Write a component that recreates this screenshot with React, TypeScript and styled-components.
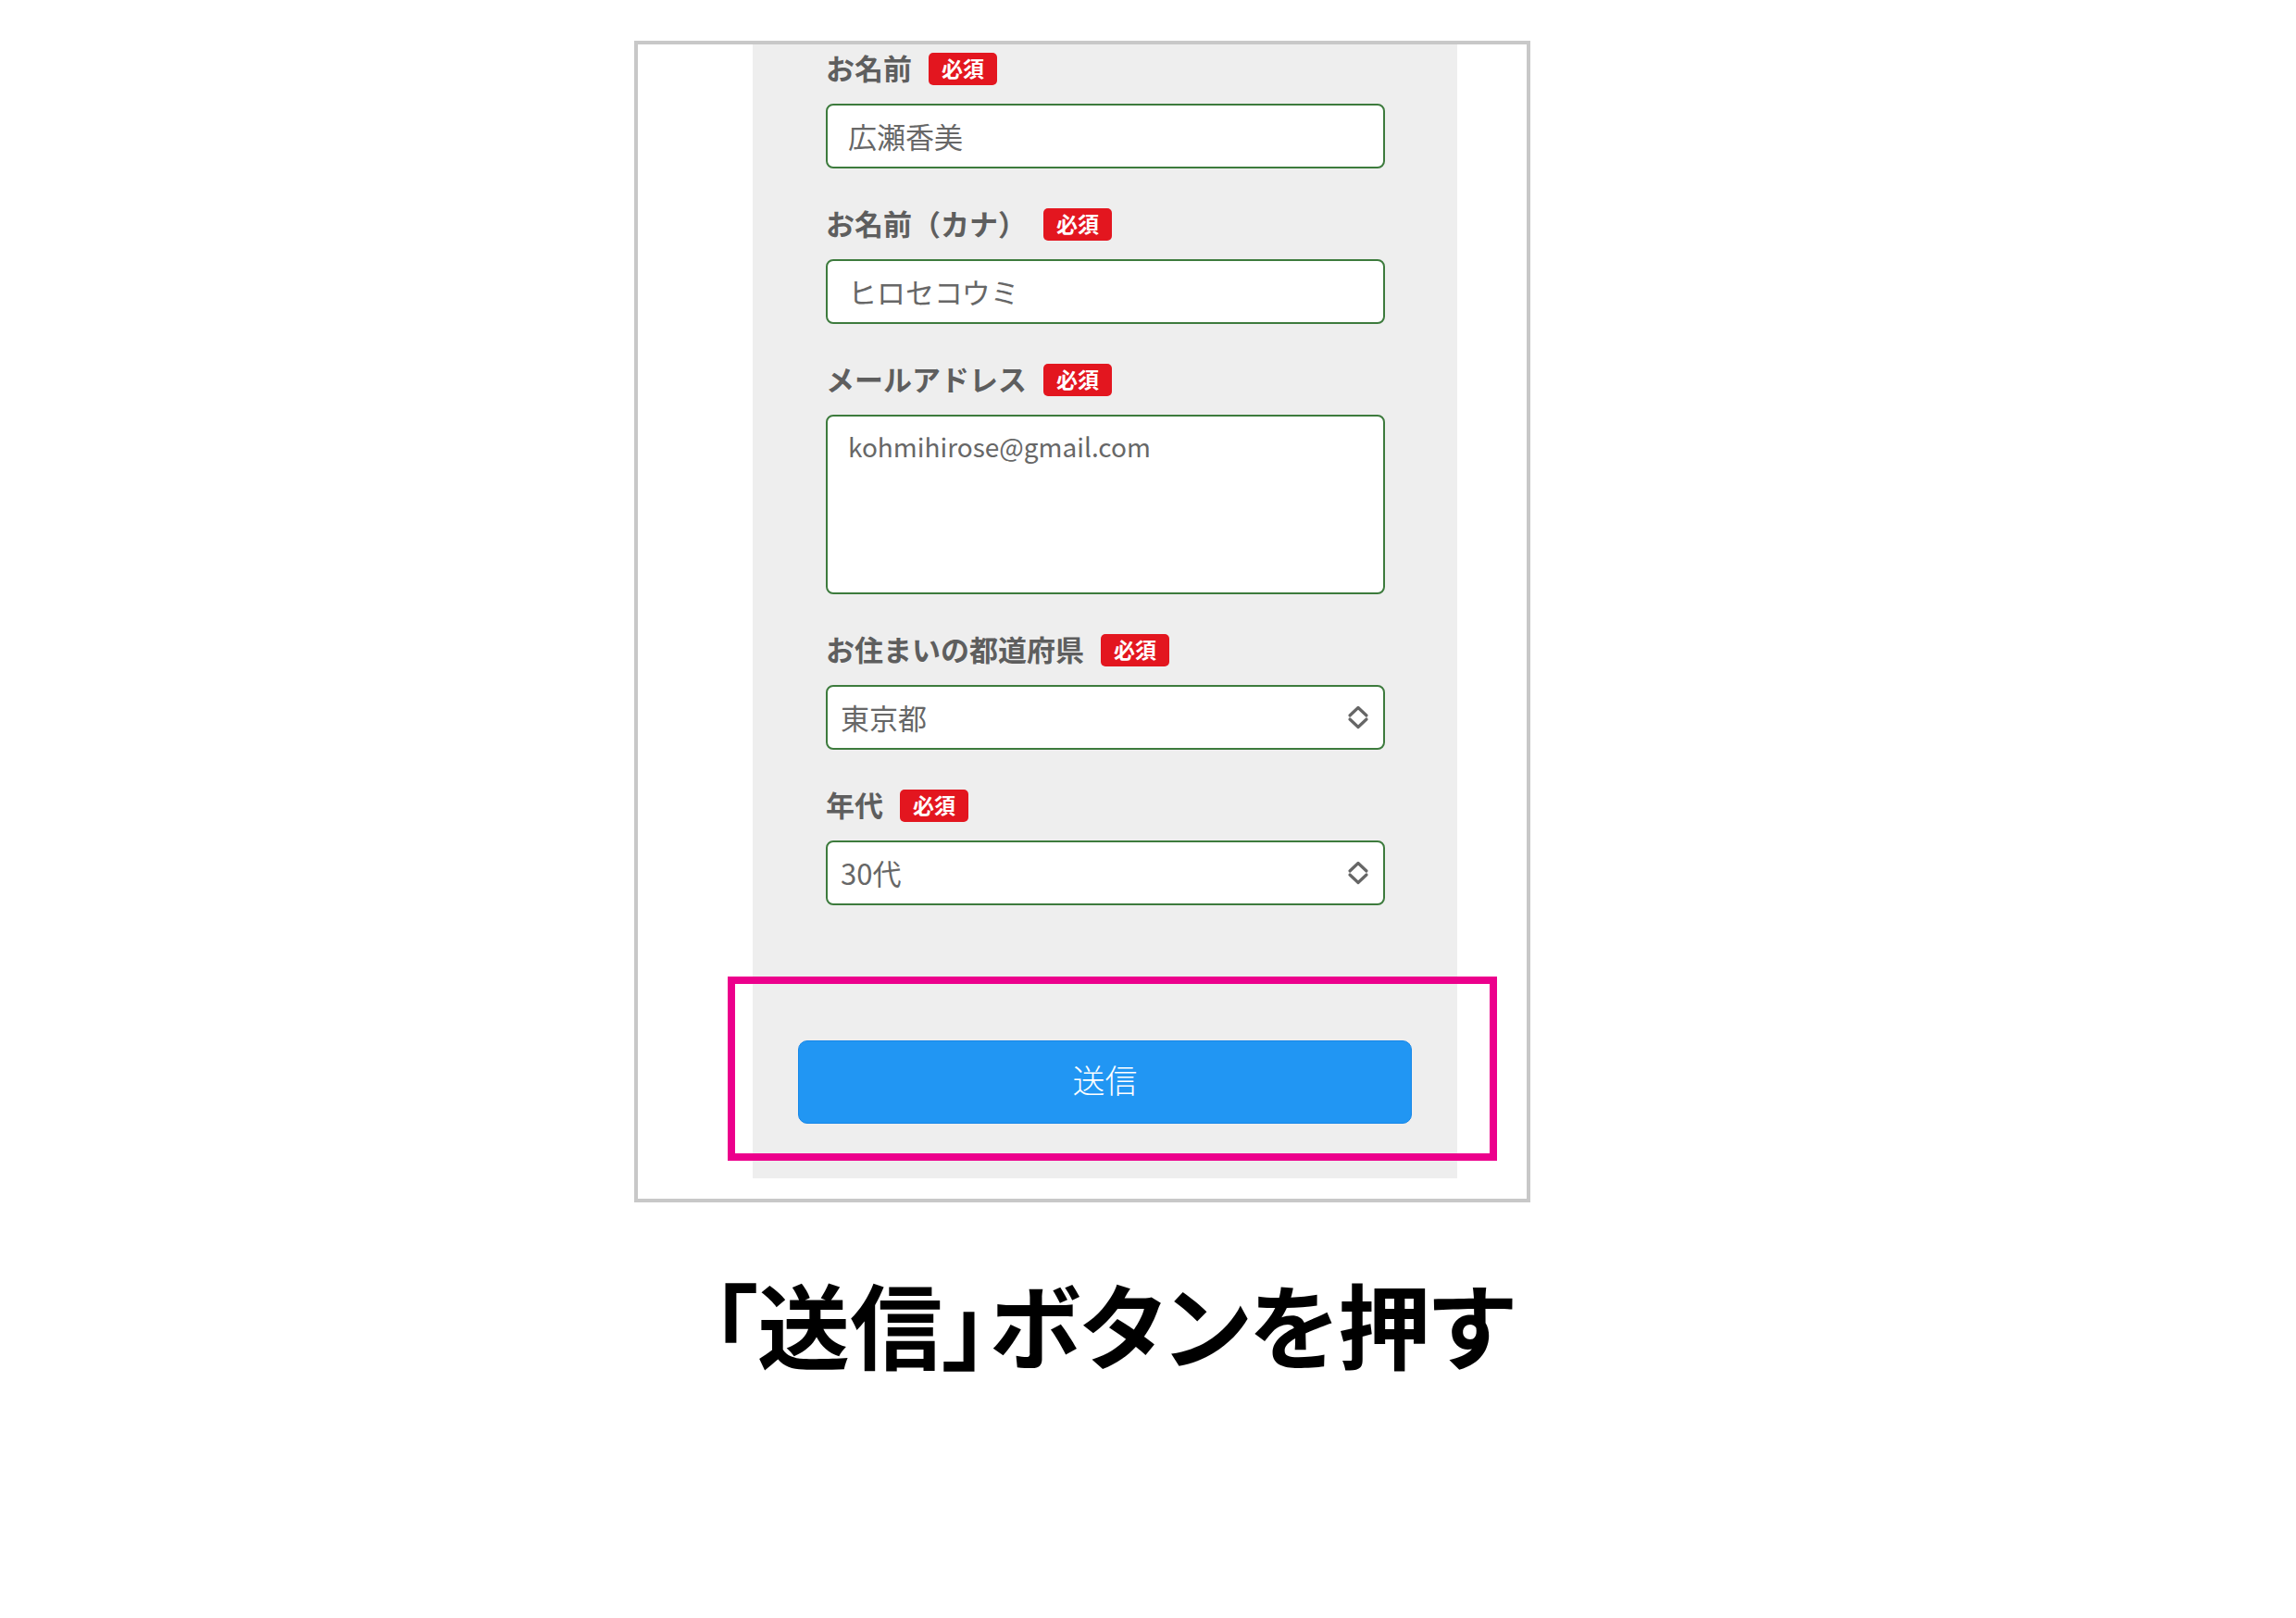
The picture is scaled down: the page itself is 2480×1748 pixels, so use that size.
import React from 'react';
import styled, { createGlobalStyle } from 'styled-components';

const GlobalStyle = createGlobalStyle`
  html, body {
    margin: 0;
    padding: 0;
    background: #ffffff;
  }
  body {
    font-family: "Noto Sans CJK JP", "Noto Sans", sans-serif;
  }
`;

const Page = styled.div`
  width: 2480px;
  height: 1748px;
  padding: 44px 0 0 685px;
  box-sizing: border-box;
`;

const Frame = styled.div`
  position: relative;
  width: 968px;
  height: 1255px;
  box-sizing: border-box;
  border: 4px solid #c8c8c8;
  background: #ffffff;
  overflow: hidden;
`;

const Panel = styled.div`
  margin-left: 124px;
  width: 761px;
  background: #eeeeee;
  padding: 9px 0 59px;
  box-sizing: border-box;
`;

const Fields = styled.div`
  padding: 0 0 0 79px;
  display: flex;
  flex-direction: column;
  gap: 43px;
`;

const Field = styled.div`
  width: 604px;
  display: flex;
  flex-direction: column;
  gap: 20px;
`;

const LabelRow = styled.div`
  height: 35px;
  display: flex;
  align-items: center;
  gap: 18px;
`;

const LabelText = styled.span`
  font-size: 31px;
  font-weight: 700;
  color: #5e5e5e;
  line-height: 1;
  padding-bottom: 5px;
`;

const Badge = styled.span`
  height: 35px;
  padding: 0 14px 2px;
  box-sizing: border-box;
  display: inline-flex;
  align-items: center;
  background: #e3161f;
  border-radius: 5px;
  color: #ffffff;
  font-size: 23px;
  font-weight: 700;
  line-height: 1;
`;

const Box = styled.div<{ tall?: boolean; pad: number }>`
  position: relative;
  height: ${(p) => (p.tall ? '194px' : '70px')};
  box-sizing: border-box;
  border: 2px solid #3d7b3d;
  border-radius: 8px;
  background: #ffffff;
  padding: ${(p) => (p.tall ? `12px ${p.pad}px` : `0 ${p.pad}px 2px`)};
  display: flex;
  align-items: ${(p) => (p.tall ? 'flex-start' : 'center')};
  color: #676767;
  font-size: ${(p) => (p.tall ? '28px' : '31px')};
  font-weight: 400;
`;

const Chevrons = styled.svg`
  position: absolute;
  right: 15px;
  top: 50%;
  transform: translateY(-50%);
`;

const SubmitArea = styled.div`
  padding: 146px 49px 0;
`;

const SubmitButton = styled.button`
  width: 100%;
  height: 90px;
  border: 1px solid #1787e8;
  border-radius: 10px;
  background: #2196f3;
  color: #ffffff;
  font-family: "Noto Sans CJK JP", sans-serif;
  font-size: 35px;
  font-weight: 300;
  padding: 0 0 8px;
  cursor: pointer;
`;

const Highlight = styled.div`
  position: absolute;
  left: 97px;
  top: 1007px;
  width: 831px;
  height: 199px;
  box-sizing: border-box;
  border: 8px solid #ec008c;
  pointer-events: none;
`;

const Title = styled.h1`
  margin: 80px 0 0 83px;
  font-size: 100px;
  font-weight: 700;
  line-height: 1;
  color: #000000;
  font-feature-settings: "palt";
`;

const SelectArrows = () => (
  <Chevrons width="24" height="26" viewBox="0 0 24 26">
    <path d="M3 11 L12 2.5 L21 11" fill="none" stroke="#666" strokeWidth="3.2" strokeLinecap="round" strokeLinejoin="round" />
    <path d="M3 15 L12 23.5 L21 15" fill="none" stroke="#666" strokeWidth="3.2" strokeLinecap="round" strokeLinejoin="round" />
  </Chevrons>
);

type FieldDef = { label: string; value: string; kind: 'input' | 'textarea' | 'select' };

const fields: FieldDef[] = [
  { label: 'お名前', value: '広瀬香美', kind: 'input' },
  { label: 'お名前（カナ）', value: 'ヒロセコウミ', kind: 'input' },
  { label: 'メールアドレス', value: 'kohmihirose@gmail.com', kind: 'textarea' },
  { label: 'お住まいの都道府県', value: '東京都', kind: 'select' },
  { label: '年代', value: '30代', kind: 'select' },
];

const App = () => (
  <>
    <GlobalStyle />
    <Page>
      <Frame>
        <Panel>
          <Fields>
            {fields.map((f) => (
              <Field key={f.label}>
                <LabelRow>
                  <LabelText>{f.label}</LabelText>
                  <Badge>必須</Badge>
                </LabelRow>
                <Box tall={f.kind === 'textarea'} pad={f.kind === 'select' ? 14 : 22}>
                  {f.value}
                  {f.kind === 'select' && <SelectArrows />}
                </Box>
              </Field>
            ))}
          </Fields>
          <SubmitArea>
            <SubmitButton type="button">送信</SubmitButton>
          </SubmitArea>
        </Panel>
        <Highlight />
      </Frame>
      <Title>「送信」ボタンを押す</Title>
    </Page>
  </>
);

export default App;
